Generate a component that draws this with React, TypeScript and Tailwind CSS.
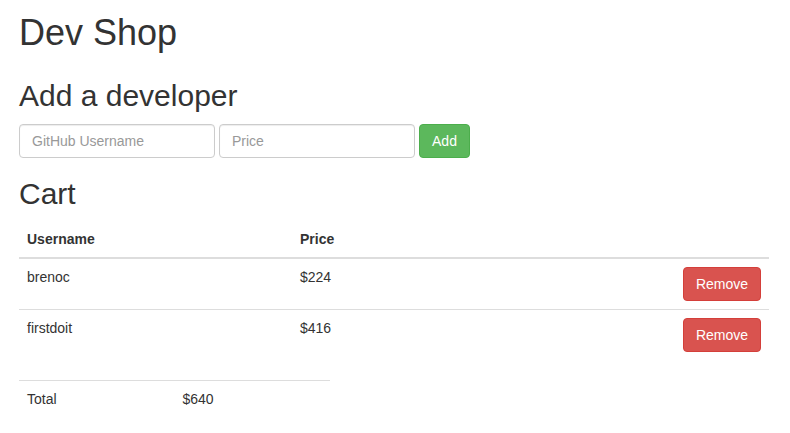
import { useState } from 'react';

type Dev = { username: string; price: number };

export default function App() {
  const [cart, setCart] = useState<Dev[]>([
    { username: 'brenoc', price: 224 },
    { username: 'firstdoit', price: 416 },
  ]);
  const [username, setUsername] = useState('');
  const [price, setPrice] = useState('');

  const total = cart.reduce((sum, d) => sum + d.price, 0);

  const add = () => {
    if (!username) return;
    setCart([...cart, { username, price: Number(price) || 0 }]);
    setUsername('');
    setPrice('');
  };

  return (
    <div className="min-h-screen bg-white pl-[19px] text-[14px] leading-[20px] text-[#333] font-['Liberation_Sans',Arial,sans-serif]">
      <h1 className="mt-[13px] text-[36px] leading-[1.1]">Dev Shop</h1>

      <h2 className="mt-[26px] text-[30px] leading-[1.1]">Add a developer</h2>
      <div className="mt-[12px] flex gap-[4px]">
        <input
          value={username}
          onChange={(e) => setUsername(e.target.value)}
          placeholder="GitHub Username"
          className="h-[34px] w-[196px] rounded-[4px] border border-[#ccc] px-[12px] text-[14px] shadow-[inset_0_1px_1px_rgba(0,0,0,0.075)] outline-none placeholder:text-[#999]"
        />
        <input
          value={price}
          onChange={(e) => setPrice(e.target.value)}
          placeholder="Price"
          className="h-[34px] w-[196px] rounded-[4px] border border-[#ccc] px-[12px] text-[14px] shadow-[inset_0_1px_1px_rgba(0,0,0,0.075)] outline-none placeholder:text-[#999]"
        />
        <button
          onClick={add}
          className="h-[34px] w-[51px] rounded-[4px] border border-[#4cae4c] bg-[#5cb85c] text-[14px] text-white"
        >
          Add
        </button>
      </div>

      <h2 className="mt-[19px] text-[30px] leading-[1.1]">Cart</h2>
      <table className="mt-[11px] w-[750px] table-fixed border-collapse">
        <colgroup>
          <col className="w-[273px]" />
          <col className="w-[273px]" />
          <col />
        </colgroup>
        <thead>
          <tr>
            <th className="border-b-2 border-[#ddd] p-[8px] text-left font-bold">Username</th>
            <th className="border-b-2 border-[#ddd] p-[8px] text-left font-bold">Price</th>
            <th className="border-b-2 border-[#ddd] p-[8px]"></th>
          </tr>
        </thead>
        <tbody>
          {cart.map((dev, i) => (
            <tr key={dev.username + i}>
              <td className={`p-[8px] align-top ${i > 0 ? 'border-t border-[#ddd]' : ''}`}>{dev.username}</td>
              <td className={`p-[8px] align-top ${i > 0 ? 'border-t border-[#ddd]' : ''}`}>${dev.price}</td>
              <td className={`p-[8px] text-right align-top ${i > 0 ? 'border-t border-[#ddd]' : ''}`}>
                <button
                  onClick={() => setCart(cart.filter((_, j) => j !== i))}
                  className="h-[34px] w-[78px] rounded-[4px] border border-[#d43f3a] bg-[#d9534f] text-[14px] text-white"
                >
                  Remove
                </button>
              </td>
            </tr>
          ))}
        </tbody>
      </table>

      <table className="mt-[20px] w-[311px] table-fixed border-collapse">
        <tbody>
          <tr>
            <td className="border-t border-[#ddd] p-[8px]">Total</td>
            <td className="border-t border-[#ddd] p-[8px]">${total}</td>
          </tr>
        </tbody>
      </table>
    </div>
  );
}
